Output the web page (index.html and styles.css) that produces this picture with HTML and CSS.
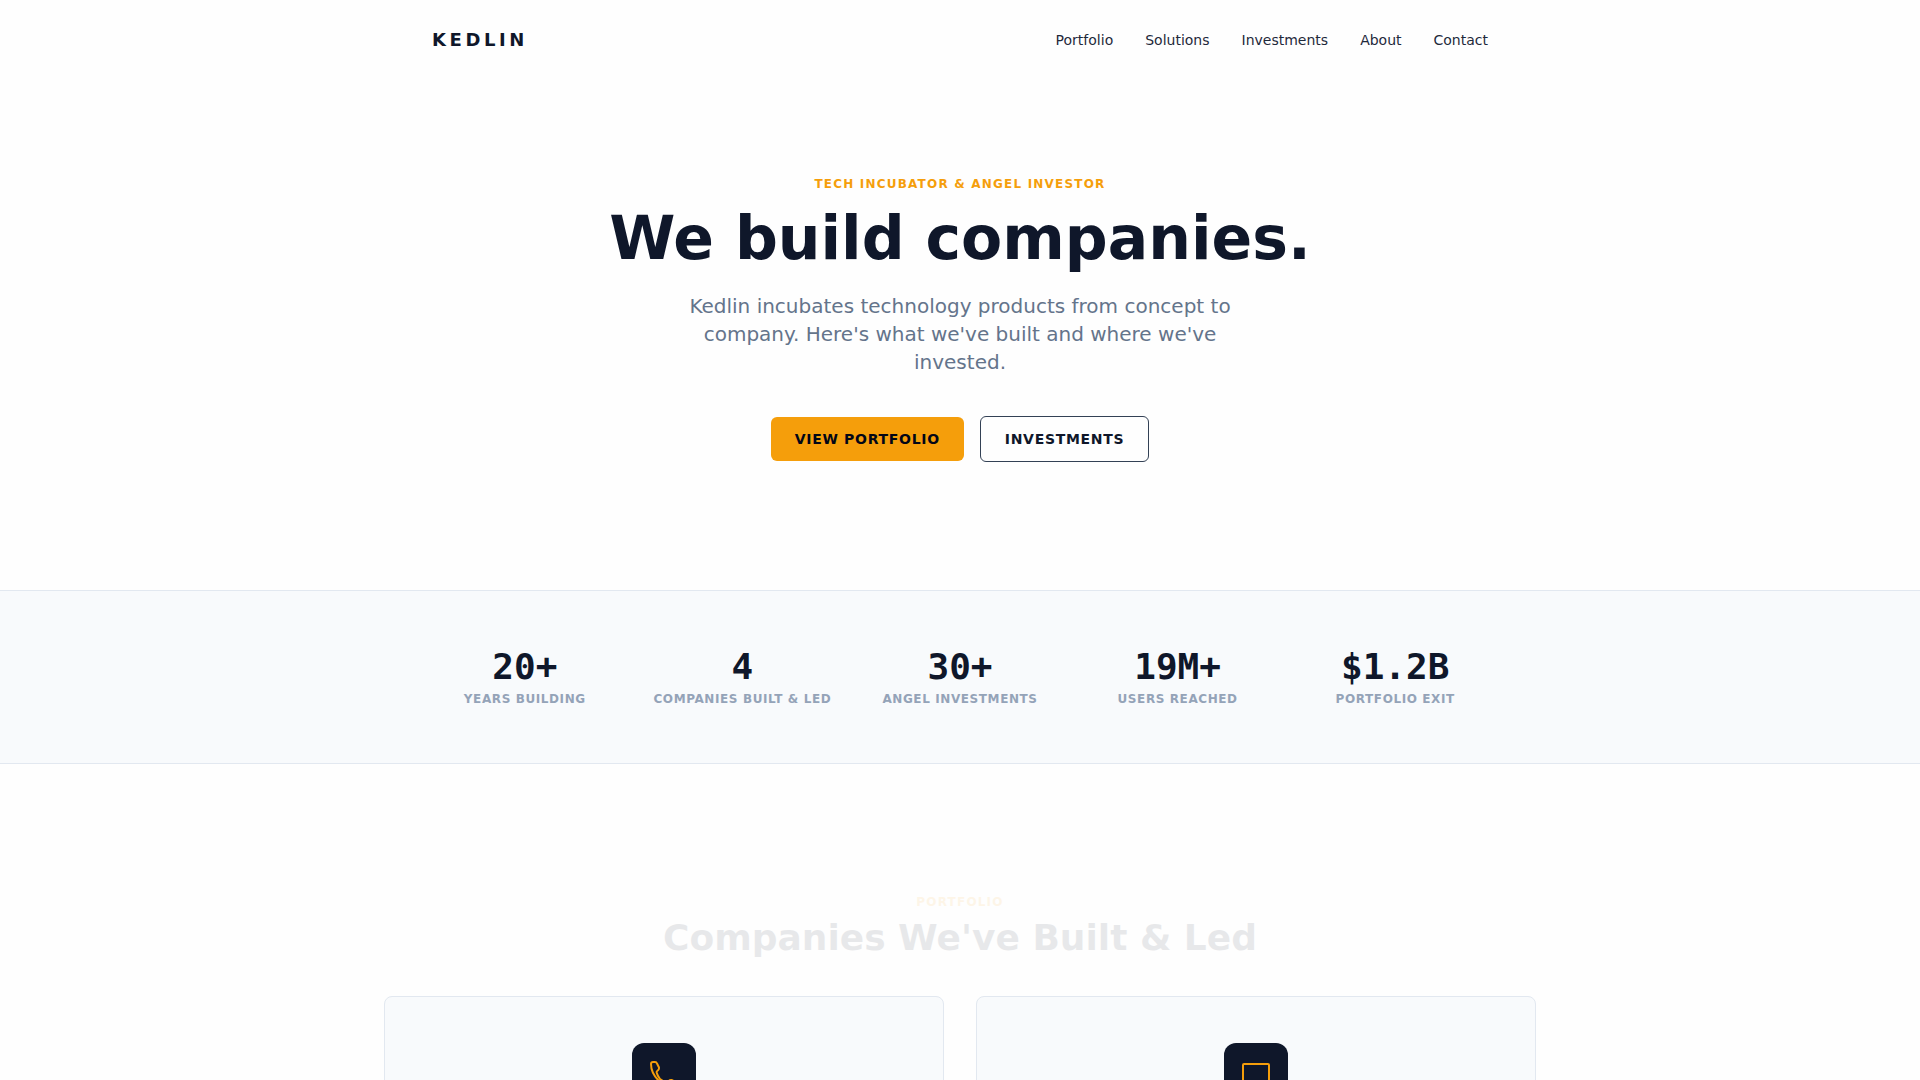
FILE: index.html
```html
<!DOCTYPE html>
<html lang="en">
<head>
<meta charset="utf-8">
<meta name="viewport" content="width=device-width, initial-scale=1">
<title>Kedlin</title>
<link rel="stylesheet" href="styles.css">
</head>
<body>
<header class="header">
  <a class="logo" href="#">KEDLIN</a>
  <nav class="nav">
    <a href="#portfolio">Portfolio</a>
    <a href="#solutions">Solutions</a>
    <a href="#investments">Investments</a>
    <a href="#about">About</a>
    <a href="#contact">Contact</a>
  </nav>
</header>
<main>
  <section class="hero">
    <p class="eyebrow">TECH INCUBATOR &amp; ANGEL INVESTOR</p>
    <h1 class="title">We build companies.</h1>
    <p class="lead">Kedlin incubates technology products from concept to company. Here's what we've built and where we've invested.</p>
    <div class="actions">
      <a class="btn btn-primary" href="#portfolio">VIEW PORTFOLIO</a>
      <a class="btn btn-outline" href="#investments">INVESTMENTS</a>
    </div>
  </section>
  <section class="stats">
    <div class="stats-grid">
      <div><p class="stat-value">20+</p><p class="stat-label">YEARS BUILDING</p></div>
      <div><p class="stat-value">4</p><p class="stat-label">COMPANIES BUILT &amp; LED</p></div>
      <div><p class="stat-value">30+</p><p class="stat-label">ANGEL INVESTMENTS</p></div>
      <div><p class="stat-value">19M+</p><p class="stat-label">USERS REACHED</p></div>
      <div><p class="stat-value">$1.2B</p><p class="stat-label">PORTFOLIO EXIT</p></div>
    </div>
  </section>
  <section class="portfolio" id="portfolio">
    <div class="section-head">
      <p class="eyebrow">PORTFOLIO</p>
      <h2 class="section-title">Companies We've Built &amp; Led</h2>
    </div>
    <div class="cards">
      <article class="card">
        <div class="tile">
          <svg width="32" height="32" viewBox="0 0 32 32" fill="none" stroke="currentColor" stroke-width="2" stroke-linejoin="round" aria-hidden="true"><path d="M5 3H7Q8.500 3 9 4.500L11 8.500Q11.300 10 10 11.200Q8.200 12.500 8.600 13.600Q9.300 16.500 12 20Q15.500 22.700 18.400 23.400Q19.500 23.800 20.800 22Q22 20.700 23.500 21L27.500 23Q29 23.500 29 25V27Q29 29 27 29Q18 29 10.500 21.500Q3 14 3 5Q3 3 5 3Z"/></svg>
        </div>
      </article>
      <article class="card">
        <div class="tile">
          <svg width="32" height="32" viewBox="0 0 32 32" fill="none" stroke="currentColor" stroke-width="2" stroke-linecap="round" stroke-linejoin="round" aria-hidden="true"><rect x="3" y="5" width="26" height="18" rx="1"/><path d="M11 28h10M16 23v5"/></svg>
        </div>
      </article>
    </div>
  </section>
</main>
</body>
</html>
```
FILE: styles.css
```css
* { box-sizing: border-box; }
body {
  margin: 0;
  background: #fefefe;
  color: #0f172a;
  font-family: "DejaVu Sans", sans-serif;
  font-size: 16px;
  line-height: 24px;
}
h1, h2, p { margin: 0; }
a { color: inherit; text-decoration: none; }

.header {
  display: flex;
  align-items: center;
  justify-content: space-between;
  max-width: 1152px;
  height: 80px;
  margin: 0 auto;
  padding: 0 48px;
}
.logo { font-size: 18px; font-weight: 700; letter-spacing: 0.2em; }
.nav { display: flex; gap: 32px; color: #1e293b; font-size: 14px; }

.hero {
  display: flex;
  flex-direction: column;
  align-items: center;
  padding: 96px 24px 128px;
  text-align: center;
}
.eyebrow {
  color: #f59e0b;
  font-size: 12px;
  font-weight: 700;
  line-height: 16px;
  letter-spacing: 0.1em;
}
.title { margin-top: 16px; font-size: 60px; font-weight: 700; line-height: 60px; }
.lead {
  max-width: 576px;
  margin-top: 24px;
  color: #64748b;
  font-size: 20px;
  line-height: 28px;
}
.actions { display: flex; align-items: center; gap: 16px; margin-top: 40px; }
.btn {
  padding: 12px 24px;
  border-radius: 6px;
  font-size: 14px;
  font-weight: 700;
  line-height: 20px;
  letter-spacing: 0.05em;
}
.btn-primary { background: #f59e0b; color: #020617; }
.btn-outline { border: 1px solid #334155; }

.stats {
  padding: 56px 24px;
  border: 1px solid #e2e8f0;
  border-width: 1px 0;
  background: #f8fafc;
  text-align: center;
}
.stats-grid {
  display: grid;
  grid-template-columns: repeat(5, 1fr);
  gap: 32px;
  max-width: 1056px;
  margin: 0 auto;
}
.stat-value {
  font-family: "DejaVu Sans Mono", monospace;
  font-size: 36px;
  font-weight: 700;
  line-height: 40px;
}
.stat-label {
  margin-top: 4px;
  color: #94a3b8;
  font-size: 12px;
  font-weight: 700;
  line-height: 16px;
  letter-spacing: 0.05em;
  white-space: nowrap;
}

.portfolio { max-width: 1200px; margin: 0 auto; padding: 130px 24px; }
.section-head { opacity: 0.09; text-align: center; }
.section-title { margin-top: 8px; font-size: 36px; font-weight: 700; line-height: 40px; }
.cards { display: grid; grid-template-columns: 1fr 1fr; gap: 32px; margin-top: 38px; }
.card {
  display: flex;
  justify-content: center;
  min-height: 320px;
  padding: 46px;
  border: 1px solid #e2e8f0;
  border-radius: 8px;
  background: #f8fafc;
}
.tile {
  display: flex;
  align-items: center;
  justify-content: center;
  width: 64px;
  height: 64px;
  border-radius: 12px;
  background: #0f172a;
  color: #f59e0b;
}
```
